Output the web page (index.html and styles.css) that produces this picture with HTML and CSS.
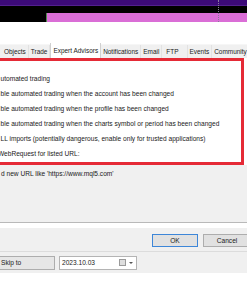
FILE: index.html
```html
<!DOCTYPE html>
<html>
<head>
<meta charset="utf-8">
<link rel="stylesheet" href="styles.css">
</head>
<body>
<div class="page">
  <div class="chart">
    <div class="bar-purple"></div>
    <div class="bar-black"><div class="pink"></div></div>
    <div class="gridline"></div>
  </div>
  <div class="blank"></div>
  <div class="tabs">
    <div class="tab first">Objects</div>
    <div class="tab">Trade</div>
    <div class="tab active">Expert Advisors</div>
    <div class="tab">Notifications</div>
    <div class="tab">Email</div>
    <div class="tab ftp">FTP</div>
    <div class="tab">Events</div>
    <div class="tab last">Community</div>
  </div>
  <div class="panel">
    <div class="line">utomated trading</div>
    <div class="line">ble automated trading when the account has been changed</div>
    <div class="line">ble automated trading when the profile has been changed</div>
    <div class="line">ble automated trading when the charts symbol or period has been changed</div>
    <div class="line">LL imports (potentially dangerous, enable only for trusted applications)</div>
    <div class="line web">WebRequest for listed URL:</div>
  </div>
  <div class="below">
    <div class="hint">d new URL like 'https://www.mql5.com'</div>
  </div>
  <div class="strip"></div>
  <div class="btnrow">
    <div class="btn ok">OK</div>
    <div class="btn cancel">Cancel</div>
  </div>
  <div class="skiprow">
    <div class="skip">Skip to</div>
    <div class="date">
      <span class="dtext">2023.10.03</span>
      <span class="cal"></span>
      <span class="arrow"></span>
    </div>
  </div>
</div>
</body>
</html>
```
FILE: styles.css
```css
html, body {
  margin: 0;
  padding: 0;
  background: #fff;
}
body {
  width: 247px;
  height: 296px;
  overflow: hidden;
  font-family: "Liberation Sans", Arial, sans-serif;
  font-size: 6.6px;
  color: #1a1a1a;
}
.page {
  width: 247px;
  overflow: hidden;
}
.chart {
  position: relative;
}
.bar-purple {
  height: 5px;
  background: #3c0a78;
  border-bottom: 1px solid #52208e;
}
.bar-black {
  height: 16px;
  background: #000;
  display: flex;
  align-items: flex-end;
}
.pink {
  margin-left: 46px;
  flex: 1;
  height: 9px;
  background: #da6ed6;
  border-left: 1px solid #4d8a4d;
}
.gridline {
  position: absolute;
  left: 218px;
  top: 0;
  height: 22px;
  border-left: 1px dotted #8a7a9a;
}
.blank {
  height: 22px;
  background: #fff;
}
.tabs {
  height: 13px;
  background: #f0f0f0;
  display: flex;
  align-items: stretch;
  border-top: 1px solid #f6f6f6;
  font-size: 6.45px;
}
.tab {
  display: flex;
  align-items: center;
  padding: 0 2px;
  border-right: 1px solid #e2e2e2;
  white-space: nowrap;
  color: #222;
}
.tab.first {
  padding-left: 4px;
}
.tab.active {
  background: #fff;
  margin-top: -2px;
  padding: 0 2px 0 2px;
  border-left: 1px solid #d0d0d0;
  border-right: 1px solid #d0d0d0;
}
.tab.ftp {
  padding: 0 8px 0 4px;
}
.tab.last {
  border-right: none;
}
.panel {
  margin-left: -3px;
  width: 241px;
  border: 3px solid #e52a36;
  background: #fff;
  padding-top: 9.5px;
}
.line {
  height: 15.2px;
  line-height: 15.2px;
  padding-left: 0.5px;
  white-space: nowrap;
}
.line.web {
  text-indent: -2.5px;
}
.below {
  height: 57px;
  background: #f0f0f0;
  border-bottom: 1px solid #b9b9b9;
}
.hint {
  padding-top: 4px;
  line-height: 10px;
  padding-left: 1px;
  white-space: nowrap;
}
.strip {
  height: 5px;
  background: #fff;
}
.btnrow {
  background: #f0f0f0;
  display: flex;
  justify-content: flex-start;
  gap: 5px;
  padding: 6px 0 4px 152px;
  border-bottom: 1px solid #dcdcdc;
}
.btn {
  flex: none;
  width: 44px;
  height: 11px;
  line-height: 11px;
  text-align: center;
  background: #e1e1e1;
  border: 1px solid #adadad;
}
.btn.ok {
  border-color: #3d86d8;
}
.btn.cancel {
  width: 46px;
}
.skiprow {
  background: #f0f0f0;
  display: flex;
  gap: 4px;
  padding: 4px 0 3px 0;
}
.skip {
  width: 53px;
  height: 12px;
  line-height: 12px;
  background: #e6e6e6;
  border: 1px solid #adadad;
  border-left: none;
  padding-left: 1px;
}
.date {
  width: 74px;
  height: 12px;
  background: #fff;
  border: 1px solid #b4b4b4;
  display: flex;
  align-items: center;
  padding-left: 2px;
  position: relative;
}
.dtext {
  flex: 1;
}
.cal {
  width: 5px;
  height: 5px;
  border: 1px solid #9a9a9a;
  background: #dedede;
  margin-right: 3px;
}
.arrow {
  width: 0;
  height: 0;
  border-left: 2px solid transparent;
  border-right: 2px solid transparent;
  border-top: 2px solid #555;
  margin-right: 3px;
}
```
